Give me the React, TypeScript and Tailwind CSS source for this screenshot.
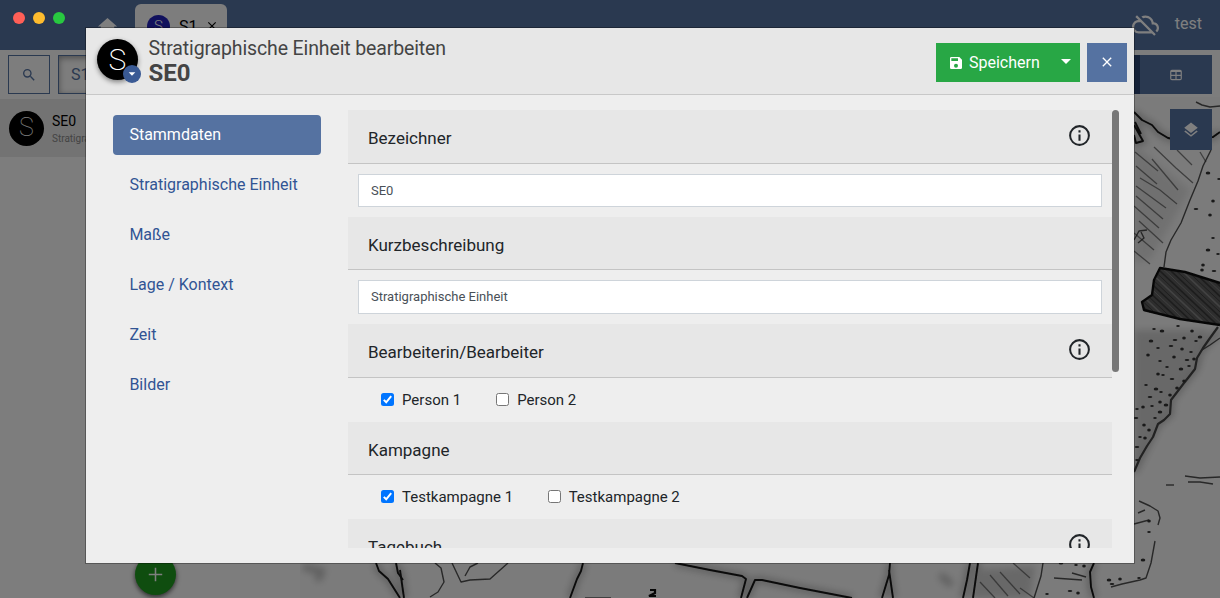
import React from "react";

const ICONS = {
  home: "M10,20V14H14V20H19V12H22L12,3L2,12H5V20H10Z",
  search:
    "M9.5,3A6.5,6.5 0 0,1 16,9.5C16,11.11 15.41,12.59 14.44,13.73L14.71,14H15.5L20.5,19L19,20.5L14,15.5V14.71L13.73,14.44C12.59,15.41 11.11,16 9.5,16A6.5,6.5 0 0,1 3,9.5A6.5,6.5 0 0,1 9.5,3M9.5,5C7,5 5,7 5,9.5C5,12 7,14 9.5,14C12,14 14,12 14,9.5C14,7 12,5 9.5,5Z",
  save: "M15,9H5V5H15M12,19A3,3 0 0,1 9,16A3,3 0 0,1 12,13A3,3 0 0,1 15,16A3,3 0 0,1 12,19M17,3H5C3.89,3 3,3.9 3,5V19A2,2 0 0,0 5,21H19A2,2 0 0,0 21,19V7L17,3Z",
  info: "M11,9H13V7H11M12,20C7.59,20 4,16.41 4,12C4,7.59 7.59,4 12,4C16.41,4 20,7.59 20,12C20,16.41 16.41,20 12,20M12,2A10,10 0 0,0 2,12A10,10 0 0,0 12,22A10,10 0 0,0 22,12A10,10 0 0,0 12,2M11,17H13V11H11V17Z",
  layers:
    "M12,16L19.36,10.27L21,9L12,2L3,9L4.63,10.27M12,18.54L4.62,12.81L3,14.07L12,21.07L21,14.07L19.37,12.8L12,18.54Z",
  close:
    "M19,6.41L17.59,5L12,10.59L6.41,5L5,6.41L10.59,12L5,17.59L6.41,19L12,13.41L17.59,19L19,17.59L13.41,12L19,6.41Z",
  table:
    "M5,3H19A3,3 0 0,1 22,6V18A3,3 0 0,1 19,21H5A3,3 0 0,1 2,18V6A3,3 0 0,1 5,3M4,7V11.5H11V7H4M13,7V11.5H20V7H13M4,13.5V19H11V13.5H4M13,13.5V19H20V13.5H13Z",
  cloudOff:
    "M24 15c0-2.64-2.05-4.78-4.65-4.96C18.67 6.59 15.64 4 12 4c-1.33 0-2.57.36-3.65.97l1.49 1.49C10.51 6.17 11.23 6 12 6c3.04 0 5.5 2.46 5.5 5.5v.5H19c1.66 0 3 1.34 3 3 0 .99-.48 1.85-1.21 2.4l1.41 1.41c1.09-.92 1.8-2.27 1.8-3.81zM4.41 3.86L3 5.27l2.77 2.77h-.42C2.34 8.36 0 10.91 0 14c0 3.31 2.69 6 6 6h11.73l2 2 1.41-1.41L4.41 3.86zM6 18c-2.21 0-4-1.79-4-4s1.79-4 4-4h1.73l8 8H6z",
  plus: "M19,12.8H12.8V19H11.2V12.8H5V11.2H11.2V5H12.8V11.2H19V12.8Z",
  caret: "M2,7L12,17L22,7Z",
};

function Icon({ name, className }: { name: keyof typeof ICONS; className: string }) {
  return (
    <svg viewBox="0 0 24 24" fill="currentColor" className={className} aria-hidden="true">
      <path d={ICONS[name]} />
    </svg>
  );
}

const HATCHES = [
  "M1154 147L1176 168L1193 183", "M1177 150L1192 165", "M1135 152L1158 171", "M1152 159L1178 190",
  "M1136 166L1157 184", "M1140 178L1160 190L1177 204", "M1136 186L1166 208", "M1136 196L1163 219",
  "M1134 206L1159 228", "M1139 221L1163 243", "M1134 233L1154 250", "M1134 251L1150 264", "M1200 152L1206 162",
  "M1013 563L1030 578", "M1000 572L1020 594", "M990 575L1008 596", "M980 582L995 598", "M1020 588L1034 598",
];

const STROKES = [
  "M1196 102L1202 105L1210 107L1220 106", "M1211 150L1203 166L1198 181L1190 200L1181 223L1171 240L1166 252L1164 267",
  "M1134 240L1139 231L1147 230M1141 232L1144 238L1138 243", "M1220 338L1210 345L1202 350",
  "M1185 476L1200 478L1220 477", "M1188 482L1200 482L1213 484", "M1166 485L1174 485",
  "M1139 501L1150 506L1158 511L1160 518L1158 525M1155 541L1151 563L1146 578L1140 580L1122 584L1111 587",
  "M1134 524L1149 520M1138 513L1145 510", "M1043 563L1041 576L1034 598", "M1054 578L1082 580M1072 573L1086 577",
  "M435 563L441 568L444 582L438 592L430 597", "M452 563L461 582L470 580L490 579L508 563",
  "M465 576L470 567L478 563", "M585 598L611 598",
];

const BOLD = [
  "M1134 112L1142 120L1152 125L1158 132L1168 138L1173 139L1213 137L1220 132", "M376 563L379 571L388 579L400 598",
  "M396 563L398 573L403 580", "M400 570L404 598", "M583 563L581 571L577 579L570 598",
  "M675 563L710 570L742 576L746 579L741 598", "M747 598L755 580L762 580L800 588L852 598",
  "M890 563L889 575L882 598M889 570L893 598", "M970 563L967 580L963 598M978 563L973 598",
  "M1094 563L1090 572L1091 587L1094 598", "M1134 125L1143 141L1136 143L1134 135M1135 122L1141 134",
];

const DOTS: number[][] = [
  [1208, 173], [1219, 179], [1213, 201], [1196, 209], [1210, 215], [1213, 238], [1208, 250], [1218, 254], [1203, 265],
  [1214, 271], [1202, 270], [1154, 329], [1162, 331], [1178, 326], [1192, 331], [1175, 340], [1184, 338], [1196, 341],
  [1151, 341], [1158, 348], [1148, 355], [1171, 346], [1182, 349], [1191, 352], [1200, 337], [1160, 361], [1174, 357],
  [1187, 360], [1194, 359], [1167, 367], [1181, 369], [1189, 366], [1158, 374], [1172, 379], [1184, 381], [1146, 385],
  [1156, 389], [1161, 392], [1170, 395], [1150, 397], [1160, 402], [1152, 406], [1166, 405], [1137, 409], [1143, 407],
  [1136, 418], [1144, 425], [1155, 418], [1160, 412], [1140, 437], [1145, 438], [1137, 447], [1149, 430], [1137, 460],
  [1143, 560], [1149, 532], [1149, 521], [1112, 584], [1120, 579], [1139, 578], [1109, 580], [1076, 565], [1084, 566],
  [1070, 591], [1078, 593], [1047, 594], [1061, 563], [1163, 375], [1177, 388],
];

function SiteMap() {
  return (
    <svg viewBox="300 97 920 501" className="block h-[501px] w-[920px] bg-[#f7f7f7]" fill="none" aria-hidden="true">
      <defs>
        <filter id="wide" x="-20%" y="-20%" width="140%" height="140%">
          <feGaussianBlur stdDeviation="3.5" />
        </filter>
        <filter id="fine" filterUnits="userSpaceOnUse" x="300" y="97" width="920" height="501">
          <feGaussianBlur stdDeviation="0.6" />
        </filter>
        <clipPath id="pit">
          <path d="M1160 267L1185 272L1220 283V325L1180 319L1144 311L1142 301L1152 295L1155 279Z" />
        </clipPath>
      </defs>
      <g filter="url(#wide)" stroke="#888" strokeWidth="7" opacity="0.5">
        {BOLD.map((d) => (
          <path key={d} d={d} />
        ))}
        <path d="M1220 330L1200 352L1196 368L1184 383L1171 400L1170 414L1158 424L1134 472" />
        <path d="M303 567L325 572M316 580L322 575M940 575L952 585" strokeWidth="7" />
        <path d="M1134 330L1210 330L1184 380L1171 400L1134 465Z" fill="#aaa" stroke="none" />
        <path d="M1134 145L1190 190L1150 260L1134 262Z" fill="#ccc" stroke="none" />
        <path d="M975 570L1035 566L1030 598H970Z" fill="#aaa" stroke="none" />
      </g>
      <g filter="url(#fine)">
        <g stroke="#555" strokeWidth="1.3" opacity="0.75">
          {HATCHES.map((d) => (
            <path key={d} d={d} />
          ))}
        </g>
        <g stroke="#333" strokeWidth="1.4" strokeLinejoin="round" opacity="0.85">
          {STROKES.map((d) => (
            <path key={d} d={d} />
          ))}
        </g>
        <g stroke="#151515" strokeWidth="1.9" strokeLinejoin="round">
          {BOLD.map((d) => (
            <path key={d} d={d} />
          ))}
          <path
            d="M1218 327L1210 338L1203 348L1197 358L1195 369L1188 378L1184 383L1171 400L1170 414L1164 420L1158 424L1153 437L1147 446L1140 458L1134 472"
            strokeWidth="2.2"
            stroke="#444"
          />
        </g>
        <g clipPath="url(#pit)">
          <path d="M1140 260H1220V330H1140Z" fill="#5c5c5c" />
          {Array.from({ length: 26 }, (_, i) => (
            <path
              key={i}
              d={`M${1090 + i * 5.5} 262L${1160 + i * 5.5} 328`}
              stroke={i % 3 ? "#3a3a3a" : "#858585"}
              strokeWidth={i % 2 ? 1.6 : 0.9}
            />
          ))}
        </g>
        <path
          d="M1220 283L1185 272L1160 268L1154 280L1152 295L1142 302L1144 310L1180 319L1220 325"
          stroke="#111"
          strokeWidth="2.4"
          strokeLinejoin="round"
        />
        {DOTS.map(([x, y], i) => (
          <ellipse key={i} cx={x} cy={y} rx={i % 3 ? 1.8 : 2.3} ry={i % 2 ? 1.1 : 1.5} fill="#333" />
        ))}
        <path d="M650 590H655L655 593L649 596H656" stroke="#111" strokeWidth="2.2" />
      </g>
    </svg>
  );
}

function Workspace() {
  return (
    <div className="flex h-full w-full flex-col bg-[#fafafa]">
      <nav className="flex h-[50px] shrink-0 items-start bg-[#5572a1] text-white">
        <Icon name="home" className="mt-[15px] ml-[96px] h-[23px] w-[23px]" />
        <div className="mt-1 ml-4 flex h-[46px] w-[92px] items-start rounded-t-md bg-[#fafafa] pt-[11px] pl-3 text-black">
          <span className="flex h-[23px] w-[23px] items-center justify-center rounded-full bg-[#2222bb] text-[15px] font-light text-white">
            S
          </span>
          <span className="ml-[9px] text-base leading-[23px]">S1</span>
          <Icon name="close" className="mt-[4px] ml-[7px] h-[14px] w-[14px]" />
        </div>
        <Icon name="cloudOff" className="mt-[11px] ml-auto h-[27px] w-[27px]" />
        <span className="mr-[18px] ml-[16px] text-base leading-[47px]">test</span>
      </nav>
      <div className="flex min-h-0 flex-1">
        <aside className="flex w-[300px] shrink-0 flex-col">
          <div className="flex h-[49px] gap-2 pt-[5px] pl-2">
            <div className="flex h-[39px] w-[42px] items-center justify-center border border-[#5572a1] text-[#5572a1]">
              <Icon name="search" className="h-4 w-4" />
            </div>
            <div className="h-[39px] w-[180px] border border-[#5572a1] pl-3 text-base leading-[37px] text-[#5572a1] shadow-[inset_0_2px_6px_#999]">
              S1
            </div>
          </div>
          <div className="flex h-[58px] items-center bg-[#e6e6e6] pl-[9px]">
            <span className="flex h-[35px] w-[35px] items-center justify-center rounded-full bg-black text-[25px] font-thin text-white">
              S
            </span>
            <div className="ml-2 pt-[3px]">
              <div className="text-[14px] leading-[18px] text-black">SE0</div>
              <div className="w-[34px] overflow-hidden text-[10px] leading-[18px] whitespace-nowrap text-[#888]">
                Stratigraphische Einheit
              </div>
            </div>
          </div>
          <div className="mt-auto mb-[3px] ml-[135px] flex h-[41px] w-[41px] items-center justify-center rounded-full bg-[#1f9a1f] text-white shadow-[0_2px_5px_#555]">
            <Icon name="plus" className="h-[23px] w-[23px]" />
          </div>
        </aside>
        <main className="relative min-w-0 flex-1">
          <div className="flex h-[47px] justify-end pt-[5px] pr-2">
            <div className="h-[39px] w-[72px] bg-[#2b4270]" />
            <div className="flex h-[39px] w-[72px] items-center justify-center bg-[#5572a1] text-white">
              <Icon name="table" className="h-[14px] w-[14px]" />
            </div>
          </div>
          <SiteMap />
          <div className="absolute top-[59px] right-2 flex h-[41px] w-[42px] items-center justify-center bg-[#5572a1] text-white">
            <Icon name="layers" className="h-[18px] w-[18px]" />
          </div>
        </main>
      </div>
    </div>
  );
}

const SECTIONS = ["Stammdaten", "Stratigraphische Einheit", "Maße", "Lage / Kontext", "Zeit", "Bilder"];

function GroupHeader({ title, info }: { title: string; info?: boolean }) {
  return (
    <div
      className={
        "flex shrink-0 items-center justify-between border-b border-[#c4c4c4] bg-[#e7e7e7] pr-5 pl-5 " +
        (info ? "h-[54px]" : "h-[53px]")
      }
    >
      <span className="pt-[3px] text-[17px] leading-6 text-[#212529]">{title}</span>
      {info && <Icon name="info" className="mb-[2px] h-[25px] w-[25px] text-[#212529]" />}
    </div>
  );
}

function Check({ label, checked }: { label: string; checked?: boolean }) {
  return (
    <div className="flex items-center gap-2">
      <span
        className={
          "mb-[2px] flex h-[13px] w-[13px] items-center justify-center rounded-[2.5px] " +
          (checked ? "bg-[#0075ff]" : "border border-[#767676] bg-white")
        }
      >
        {checked && (
          <svg viewBox="0 0 13 13" className="h-[13px] w-[13px]" fill="none" aria-hidden="true">
            <path d="M2.8 6.9L5.2 9.3L10.2 3.2" stroke="#fff" strokeWidth="2" />
          </svg>
        )}
      </span>
      <span className="text-[15px] leading-5 text-[#212529]">{label}</span>
    </div>
  );
}

function Editor() {
  return (
    <div className="absolute top-7 left-[86px] flex h-[535px] w-[1048px] flex-col bg-[#eeeeee] shadow-[0_0_0_1px_rgba(0,0,0,0.3)]">
      <header className="flex h-[67px] shrink-0 border-b border-[#c8c8c8] bg-[#e7e7e7] pl-[11px]">
        <div className="relative mt-[11px] h-[41px] w-[41px] shrink-0">
          <span className="flex h-[41px] w-[41px] items-center justify-center rounded-full bg-black text-[30px] font-extralight text-white shadow-[0_2px_5px_rgba(0,0,0,0.45)]">
            S
          </span>
          <span className="absolute top-[26px] left-[26px] flex h-[18px] w-[18px] items-center justify-center rounded-full bg-[#3a5a94] text-white">
            <Icon name="caret" className="h-2 w-2" />
          </span>
        </div>
        <div className="ml-[10.5px] pt-[9px] text-[#444]">
          <div className="text-[19.5px] leading-6 tracking-[-0.13px]">Stratigraphische Einheit bearbeiten</div>
          <div className="text-[24px] leading-[25px] font-bold">SE0</div>
        </div>
        <div className="mt-[15px] mr-[7px] ml-auto flex h-[39px]">
          <div className="flex w-[144px] items-center bg-[#28a745] pl-[12px] text-white">
            <Icon name="save" className="h-4 w-4" />
            <span className="ml-[5px] text-base">Speichern</span>
            <svg viewBox="0 0 10 5" className="mb-[3px] ml-auto mr-[9px] h-[5px] w-[10px]" fill="currentColor" aria-hidden="true">
              <path d="M0 0H10L5 5Z" />
            </svg>
          </div>
          <div className="ml-[7px] flex w-10 items-center justify-center bg-[#5572a1] text-white">
            <Icon name="close" className="mb-px h-4 w-4" />
          </div>
        </div>
      </header>
      <div className="flex min-h-0 flex-1 pt-[15px]">
        <div className="ml-[27px] flex w-[208px] shrink-0 flex-col gap-[10px] pt-[5px]">
          {SECTIONS.map((s, i) => (
            <div
              key={s}
              className={
                "h-10 rounded-[4px] pl-[16.4px] text-base leading-[39px] " +
                (i === 0 ? "bg-[#5572a1] text-white" : "text-[#315494]")
              }
            >
              {s}
            </div>
          ))}
        </div>
        <div className="ml-[27px] flex h-[438px] w-[764px] shrink-0 flex-col overflow-hidden">
          <GroupHeader title="Bezeichner" info />
          <div className="shrink-0 px-[10px] py-[10px]">
            <div className="h-[33px] border border-[#ced4da] bg-white pl-3 text-[13px] leading-[31px] text-[#495057]">SE0</div>
          </div>
          <GroupHeader title="Kurzbeschreibung" />
          <div className="shrink-0 px-[10px] py-[10px]">
            <div className="h-[34px] border border-[#ced4da] bg-white pl-3 text-[13px] leading-8 text-[#495057]">
              Stratigraphische Einheit
            </div>
          </div>
          <GroupHeader title="Bearbeiterin/Bearbeiter" info />
          <div className="flex h-11 shrink-0 items-center gap-[35px] pl-[33px]">
            <Check label="Person 1" checked />
            <Check label="Person 2" />
          </div>
          <GroupHeader title="Kampagne" />
          <div className="flex h-11 shrink-0 items-center gap-[34.5px] pl-[33px]">
            <Check label="Testkampagne 1" checked />
            <Check label="Testkampagne 2" />
          </div>
          <GroupHeader title="Tagebuch" info />
        </div>
        <div className="h-[262px] w-[7px] rounded-full bg-[#777]" />
      </div>
    </div>
  );
}

export default function App() {
  return (
    <div className="relative h-[598px] w-[1220px] overflow-hidden font-['Roboto',sans-serif]">
      <Workspace />
      <div className="absolute inset-0 bg-black/50" />
      <Editor />
      <div className="absolute top-3 left-[13px] flex gap-2">
        <span className="h-3 w-3 rounded-full bg-[#ff5f57]" />
        <span className="h-3 w-3 rounded-full bg-[#febc2e]" />
        <span className="h-3 w-3 rounded-full bg-[#28c840]" />
      </div>
    </div>
  );
}
